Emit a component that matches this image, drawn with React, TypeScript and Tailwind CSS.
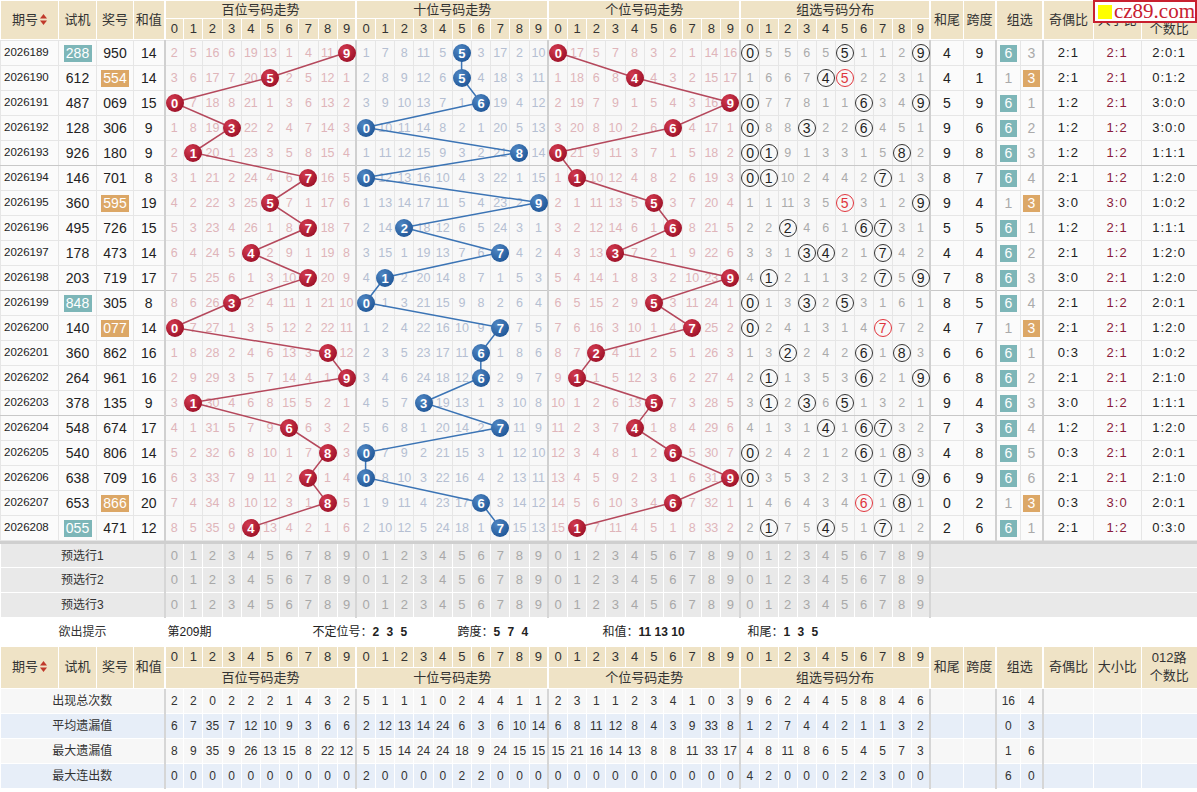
import React from 'react'

const SHIJI = ['288', '612', '487', '128', '926', '146', '360', '495', '178', '203', '848', '140', '360', '264', '378', '548', '540', '638', '653', '055']
const JIANG = ['950', '554', '069', '306', '180', '701', '595', '726', '473', '719', '305', '077', '862', '961', '135', '674', '806', '709', '866', '471']

// omission values of 2026189, later rows are worked out from the draws
const FIRST_MISS = [
  [2, 5, 16, 6, 19, 13, 1, 4, 11, 0],
  [1, 7, 8, 11, 5, 0, 3, 17, 2, 10],
  [0, 17, 5, 7, 8, 3, 2, 1, 14, 16],
  [0, 5, 5, 6, 5, 0, 1, 1, 2, 0],
]

const STATS = [
  {
    label: '出现总次数',
    bg: 'bg-[#f7f7f7]',
    nums: [2, 2, 0, 2, 2, 2, 1, 4, 3, 2, 5, 1, 1, 1, 0, 2, 4, 4, 1, 1, 2, 3, 1, 1, 2, 3, 4, 1, 0, 3, 9, 6, 2, 4, 4, 5, 8, 8, 4, 6],
    g: [16, 4],
  },
  {
    label: '平均遗漏值',
    bg: 'bg-[#e7eef8]',
    nums: [6, 7, 35, 7, 12, 10, 9, 3, 6, 6, 2, 12, 13, 14, 24, 6, 3, 6, 10, 14, 6, 8, 11, 12, 8, 4, 3, 9, 33, 8, 1, 2, 7, 4, 4, 2, 1, 1, 3, 2],
    g: [0, 3],
  },
  {
    label: '最大遗漏值',
    bg: 'bg-[#f7f7f7]',
    nums: [8, 9, 35, 9, 26, 13, 15, 8, 22, 12, 5, 15, 14, 24, 24, 18, 9, 24, 15, 15, 15, 21, 16, 14, 13, 8, 8, 11, 33, 17, 4, 8, 11, 8, 6, 5, 4, 5, 7, 3],
    g: [1, 6],
  },
  {
    label: '最大连出数',
    bg: 'bg-[#e7eef8]',
    nums: [0, 0, 0, 0, 0, 0, 0, 0, 0, 0, 2, 0, 0, 0, 0, 2, 2, 0, 0, 0, 0, 0, 0, 0, 0, 0, 0, 0, 0, 0, 4, 2, 0, 0, 0, 2, 2, 3, 0, 0],
    g: [6, 0],
  },
]

const TITLES = ['百位号码走势', '十位号码走势', '个位号码走势', '组选号码分布']
const SEC_X = [164, 356, 548]
const COL_W = 19.2

type Row = {
  period: string
  shiji: string
  jiang: string
  d: number[]
  miss: number[][]
  type: 3 | 6
  g6: number
  g3: number
}

function buildRows() {
  const rows: Row[] = []
  JIANG.forEach((jiang, i) => {
    const d = jiang.split('').map(Number)
    const type = new Set(d).size === 3 ? 6 : 3
    let miss = FIRST_MISS
    let g6 = 0
    let g3 = 3
    if (i > 0) {
      const prev = rows[i - 1]
      miss = [0, 1, 2].map((pos) => prev.miss[pos].map((v, n) => (d[pos] === n ? 0 : v + 1)))
      miss.push(prev.miss[3].map((v, n) => (d.includes(n) ? 0 : v + 1)))
      g6 = type === 6 ? 0 : prev.g6 + 1
      g3 = type === 3 ? 0 : prev.g3 + 1
    }
    rows.push({ period: String(2026189 + i), shiji: SHIJI[i], jiang, d, miss, type, g6, g3 })
  })
  return rows
}

function Cols() {
  return (
    <colgroup>
      <col className="w-[58px]" />
      <col className="w-[38px]" />
      <col className="w-[37px]" />
      <col className="w-[31px]" />
      {Array.from({ length: 30 }, (_, i) => (
        <col key={i} className="w-[19.2px]" />
      ))}
      {Array.from({ length: 10 }, (_, i) => (
        <col key={'g' + i} className="w-[19px]" />
      ))}
      <col className="w-[33px]" />
      <col className="w-[33px]" />
      <col className="w-[24px]" />
      <col className="w-[23px]" />
      <col className="w-[50px]" />
      <col className="w-[48px]" />
      <col className="w-[56px]" />
    </colgroup>
  )
}

function SortIcon() {
  return (
    <svg width="7" height="11" viewBox="0 0 7 11" className="ml-[2px] inline-block align-[-1px]">
      <path d="M3.5 0L7 4.5H0z" fill="#c0392b" />
      <path d="M3.5 11L7 6.5H0z" fill="#c0392b" />
    </svg>
  )
}

const th = 'border border-white bg-[#efe3c6] p-0 text-center font-normal leading-[16px] text-[#333]'

function Header({ bottom }: { bottom?: boolean }) {
  const lead = (
    <>
      <th rowSpan={2} className={`${th} text-[13px] font-bold`}>
        期号
        <SortIcon />
      </th>
      <th rowSpan={2} className={`${th} text-[13px]`}>试机</th>
      <th rowSpan={2} className={`${th} text-[13px]`}>奖号</th>
      <th rowSpan={2} className={`${th} text-[13px]`}>和值</th>
    </>
  )
  const titles = TITLES.map((t) => (
    <th key={t} colSpan={10} className={`${th} border-l-2 text-[13px]`}>
      {t}
    </th>
  ))
  const digits = Array.from({ length: 40 }, (_, i) => (
    <th key={i} className={`${th} text-[13px] ${i % 10 === 0 ? 'border-l-2' : ''}`}>
      {i % 10}
    </th>
  ))
  const tail = (
    <>
      <th rowSpan={2} className={`${th} border-l-2 text-[13px]`}>和尾</th>
      <th rowSpan={2} className={`${th} text-[13px]`}>跨度</th>
      <th rowSpan={2} colSpan={2} className={`${th} border-l-2 text-[13px]`}>组选</th>
      <th rowSpan={2} className={`${th} border-l-2 text-[13px]`}>奇偶比</th>
      <th rowSpan={2} className={`${th} text-[13px]`}>大小比</th>
      <th rowSpan={2} className={`${th} text-[13px] leading-[18px]`}>
        012路
        <br />
        个数比
      </th>
    </>
  )
  return bottom ? (
    <thead>
      <tr className="h-[21px]">
        {lead}
        {digits}
        {tail}
      </tr>
      <tr className="h-[21px]">{titles}</tr>
    </thead>
  ) : (
    <thead>
      <tr className="h-[18px]">
        {lead}
        {titles}
        {tail}
      </tr>
      <tr className="h-[21px]">{digits}</tr>
    </thead>
  )
}

const td = 'border border-[#e6e6e6] p-0 text-center'
const sep = 'border-l-2 border-l-[#d0d0d0]'
const missColor = ['text-[#dfb5ba]', 'text-[#b5bfd2]', 'text-[#dfb5ba]', 'text-[#ababab]']

export default function App() {
  const rows = buildRows()
  const lines = [0, 1, 2].map((pos) =>
    rows.map((r, i) => `${SEC_X[pos] + (r.d[pos] + 0.5) * COL_W},${i * 25 + 12.5}`).join(' ')
  )

  return (
    <div className="relative w-[1197px] bg-white font-['Liberation_Sans','Noto_Sans_CJK_SC',sans-serif] text-[#222]">
      <table className="w-[1197px] table-fixed border-collapse">
        <Cols />
        <Header />
      </table>

      {/* data rows with the trend lines on top */}
      <div className="relative">
        <table className="w-[1197px] table-fixed border-collapse bg-[#f8f8f8]">
          <Cols />
          <tbody>
            {rows.map((r, i) => {
              const five = i % 5 === 4 && i < 19 ? 'border-b-[#c8c8c8]' : ''
              const odd = r.d.filter((x) => x % 2 === 1).length
              const big = r.d.filter((x) => x >= 5).length
              const road = [0, 1, 2].map((k) => r.d.filter((x) => x % 3 === k).length).join(':')
              const sum = r.d.reduce((a, b) => a + b, 0)
              const shijiG3 = new Set(r.shiji.split('')).size < 3
              return (
                <tr key={r.period} className="h-[25px]">
                  <td className={`${td} ${five} bg-[#fbfbfb] pl-[3px] text-left text-[11.5px]`}>{r.period}</td>
                  <td className={`${td} ${five} bg-[#fbfbfb] text-[14px]`}>
                    {shijiG3 ? (
                      <span className="inline-block h-[17px] w-[28px] bg-[#7db6b8] leading-[17px] text-white">{r.shiji}</span>
                    ) : (
                      r.shiji
                    )}
                  </td>
                  <td className={`${td} ${five} bg-[#fbfbfb] text-[14px]`}>
                    {r.type === 3 ? (
                      <span className="inline-block h-[17px] w-[28px] bg-[#dca766] leading-[17px] text-white">{r.jiang}</span>
                    ) : (
                      r.jiang
                    )}
                  </td>
                  <td className={`${td} ${five} bg-[#fbfbfb] text-[14px]`}>{sum}</td>
                  {[0, 1, 2].map((pos) =>
                    r.miss[pos].map((v, n) => (
                      <td key={`${pos}-${n}`} className={`${td} ${five} ${n === 0 ? sep : ''} text-[12.5px]`}>
                        {v === 0 ? (
                          <span
                            className={`relative z-[2] inline-flex h-[18px] w-[18px] items-center justify-center rounded-full align-middle text-[13px] font-bold text-white ${
                              pos === 1
                                ? 'bg-[radial-gradient(circle_at_35%_30%,#4f86c2,#22599a_75%)]'
                                : 'bg-[radial-gradient(circle_at_35%_30%,#d23a4f,#a0132a_75%)]'
                            }`}
                          >
                            {n}
                          </span>
                        ) : (
                          <span className={missColor[pos]}>{v}</span>
                        )}
                      </td>
                    ))
                  )}
                  {r.miss[3].map((v, n) => {
                    const cnt = r.d.filter((x) => x === n).length
                    return (
                      <td key={'g' + n} className={`${td} ${five} ${n === 0 ? sep : ''} text-[12.5px]`}>
                        {cnt === 0 ? (
                          <span className={missColor[3]}>{v}</span>
                        ) : (
                          <span
                            className={`inline-flex h-[18px] w-[18px] items-center justify-center rounded-full border align-middle text-[14px] ${
                              cnt > 1 ? 'border-[#e0343c] text-[#e0343c]' : 'border-[#333] text-[#222]'
                            }`}
                          >
                            {n}
                          </span>
                        )}
                      </td>
                    )
                  })}
                  <td className={`${td} ${five} ${sep} bg-[#fbfbfb] text-[14px]`}>{sum % 10}</td>
                  <td className={`${td} ${five} bg-[#fbfbfb] text-[14px]`}>{Math.max(...r.d) - Math.min(...r.d)}</td>
                  <td className={`${td} ${five} ${sep} bg-[#fbfbfb] text-[14px]`}>
                    {r.type === 6 ? (
                      <span className="inline-block h-[17px] w-[17px] bg-[#7db6b8] leading-[17px] text-white">6</span>
                    ) : (
                      <span className="text-[#aaa]">{r.g6}</span>
                    )}
                  </td>
                  <td className={`${td} ${five} bg-[#fbfbfb] text-[14px]`}>
                    {r.type === 3 ? (
                      <span className="inline-block h-[17px] w-[17px] bg-[#dca766] leading-[17px] text-white">3</span>
                    ) : (
                      <span className="text-[#aaa]">{r.g3}</span>
                    )}
                  </td>
                  <td className={`${td} ${five} ${sep} bg-[#fbfbfb] text-[13px] tracking-[1px]`}>
                    {odd}:{3 - odd}
                  </td>
                  <td className={`${td} ${five} bg-[#fbfbfb] text-[13px] tracking-[1px] text-[#8a1c3c]`}>
                    {big}:{3 - big}
                  </td>
                  <td className={`${td} ${five} bg-[#fbfbfb] text-[13px] tracking-[1px]`}>{road}</td>
                </tr>
              )
            })}
          </tbody>
        </table>
        <svg className="pointer-events-none absolute left-0 top-0 z-[1]" width="1197" height="500">
          <polyline points={lines[0]} fill="none" stroke="#b5485c" strokeWidth="1.5" />
          <polyline points={lines[1]} fill="none" stroke="#3b74b5" strokeWidth="1.5" />
          <polyline points={lines[2]} fill="none" stroke="#b5485c" strokeWidth="1.5" />
        </svg>
      </div>

      {/* preselect rows and hint */}
      <table className="w-[1197px] table-fixed border-collapse border-t-[3px] border-t-[#cfcfcf]">
        <Cols />
        <tbody>
          {[1, 2, 3].map((k) => (
            <tr key={k} className="h-[25px] bg-[#e9e9e9]">
              <td colSpan={4} className="border border-white p-0 text-center text-[12px] text-[#333]">
                预选行{k}
              </td>
              {Array.from({ length: 40 }, (_, i) => (
                <td
                  key={i}
                  className={`border border-white p-0 text-center text-[13px] text-[#a8a8a8] ${i % 10 === 0 ? 'border-l-2 border-l-[#d6d6d6]' : ''}`}
                >
                  {i % 10}
                </td>
              ))}
              <td colSpan={7} className="border-y border-l-2 border-white border-l-[#d6d6d6] p-0" />
            </tr>
          ))}
          <tr className="h-[28px] bg-white">
            <td colSpan={4} className="p-0 text-center text-[12px] text-[#333]">
              欲出提示
            </td>
            <td colSpan={47} className="p-0 text-[12px] text-[#222]">
              <div className="flex items-center pl-[3px]">
                <span className="w-[145px]">第209期</span>
                <span className="w-[145px]">
                  不定位号：<b className="tracking-[2px]">2 3 5</b>
                </span>
                <span className="w-[145px]">
                  跨度：<b className="tracking-[2px]">5 7 4</b>
                </span>
                <span className="w-[145px]">
                  和值：<b>11 13 10</b>
                </span>
                <span className="w-[145px]">
                  和尾：<b className="tracking-[2px]">1 3 5</b>
                </span>
              </div>
            </td>
          </tr>
        </tbody>
      </table>

      {/* bottom header and statistics */}
      <table className="w-[1197px] table-fixed border-collapse">
        <Cols />
        <Header bottom />
        <tbody>
          {STATS.map((s) => (
            <tr key={s.label} className={`h-[25px] ${s.bg}`}>
              <td colSpan={4} className="border border-white p-0 text-center text-[12px] text-[#333]">
                {s.label}
              </td>
              {s.nums.map((v, i) => (
                <td
                  key={i}
                  className={`border border-white p-0 text-center text-[12px] text-[#333] ${i % 10 === 0 ? 'border-l-2 border-l-[#d6d6d6]' : ''}`}
                >
                  {v}
                </td>
              ))}
              <td className="border border-white border-l-2 border-l-[#d6d6d6] p-0" />
              <td className="border border-white p-0" />
              <td className="border border-white border-l-2 border-l-[#d6d6d6] p-0 text-center text-[12px] text-[#333]">{s.g[0]}</td>
              <td className="border border-white p-0 text-center text-[12px] text-[#333]">{s.g[1]}</td>
              <td className="border border-white border-l-2 border-l-[#d6d6d6] p-0" />
              <td className="border border-white p-0" />
              <td className="border border-white p-0" />
            </tr>
          ))}
        </tbody>
      </table>

      {/* site logo */}
      <div className="absolute right-0 top-0 z-[3] flex h-[23px] w-[104px] items-center border-2 border-[#c8202f] bg-white">
        <span className="ml-[3px] h-[14px] w-[14px] bg-[#ffff00]" />
        <span className="ml-[2px] font-['Liberation_Serif',serif] text-[21px] leading-none text-[#c8202f]">cz89.com</span>
      </div>
    </div>
  )
}
